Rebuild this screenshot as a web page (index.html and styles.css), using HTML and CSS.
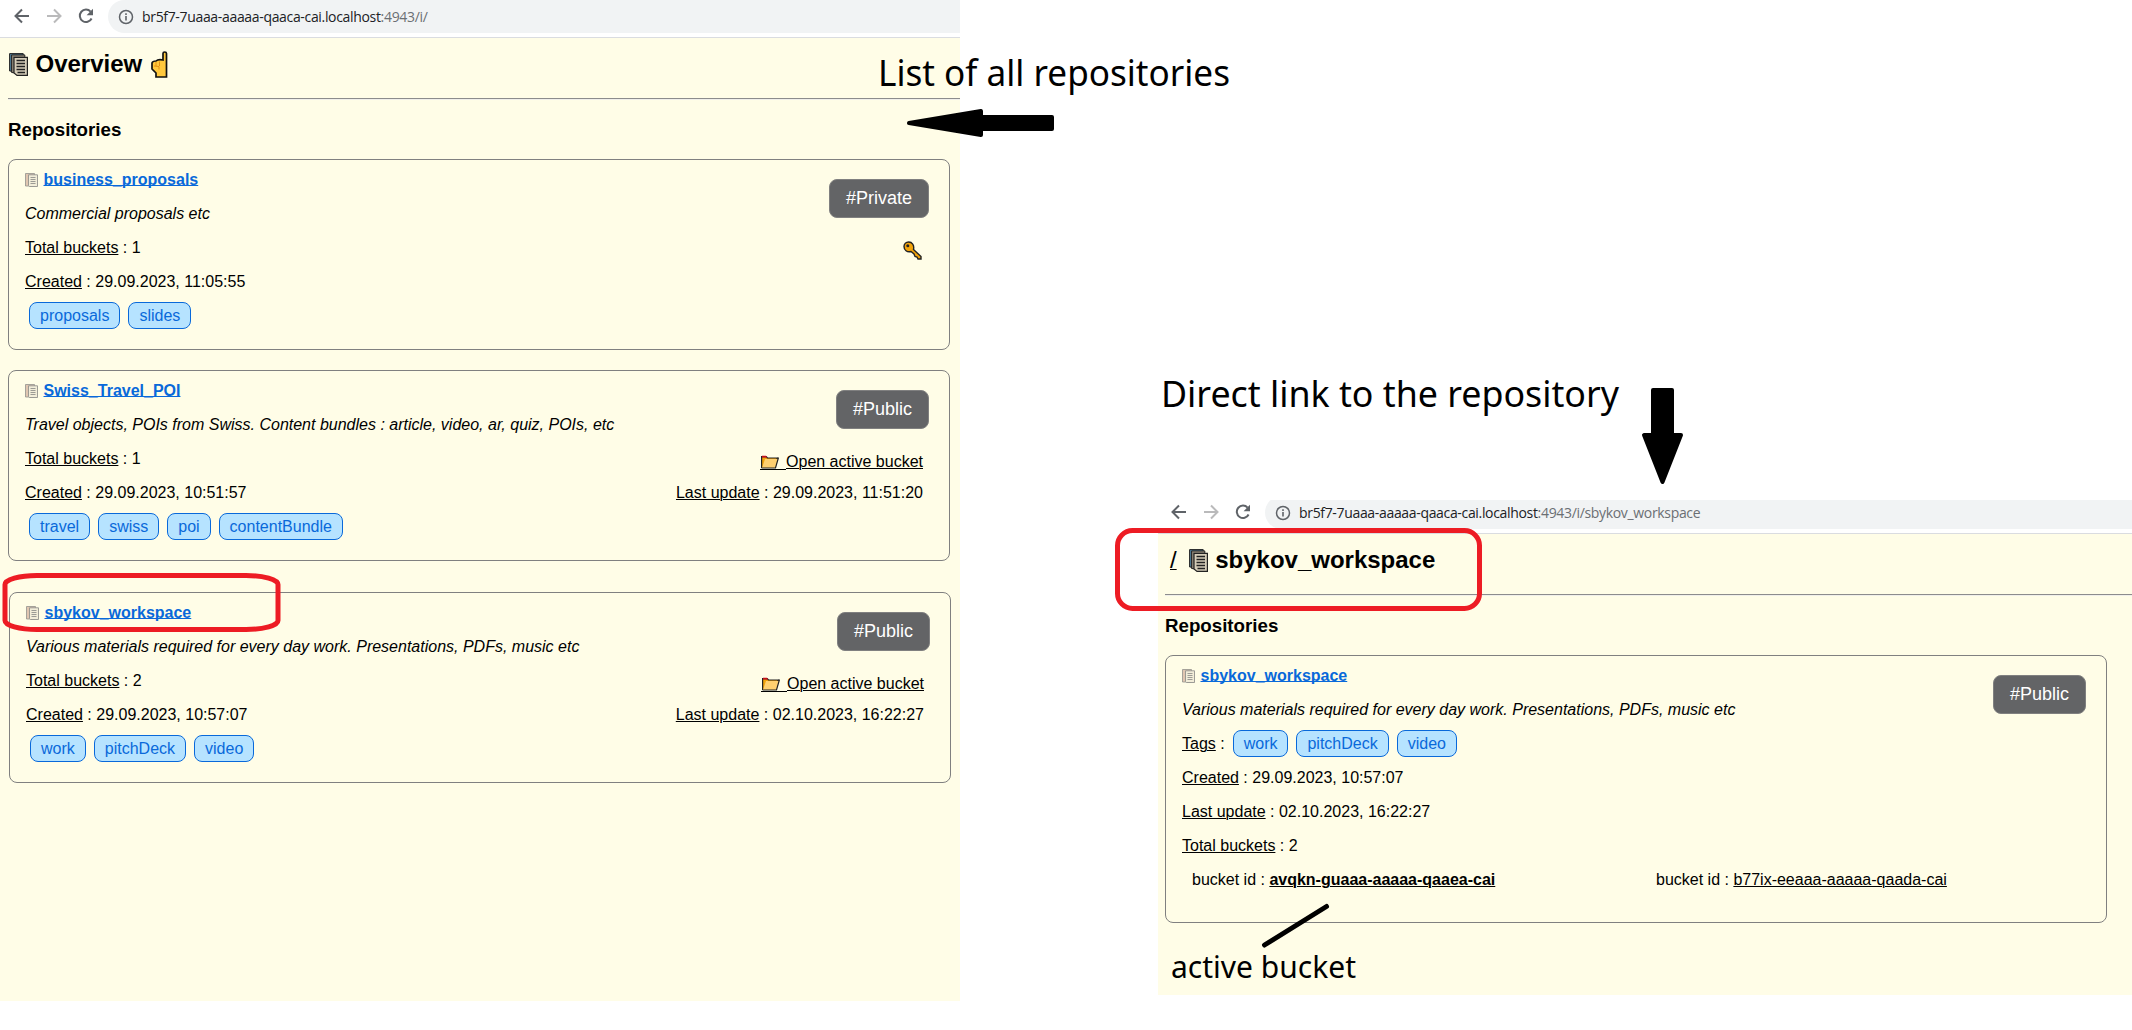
FILE: index.html
```html
<!DOCTYPE html>
<html lang="en">
<head>
<meta charset="utf-8">
<title>Repositories overview</title>
<link rel="stylesheet" href="styles.css">
</head>
<body>
<svg class="defs" width="0" height="0">
  <symbol id="back" viewBox="0 0 16 16"><path d="M15 8H2M8 1.5 1.5 8 8 14.5" fill="none" stroke="currentColor" stroke-width="2"/></symbol>
  <symbol id="forward" viewBox="0 0 16 16"><path d="M1 8h13M8 1.5 14.500 8 8 14.500" fill="none" stroke="currentColor" stroke-width="2"/></symbol>
  <symbol id="reload" viewBox="0 0 16 16"><path d="M13.600 10.500A6.200 6.200 0 1 1 12.600 3.600" fill="none" stroke="currentColor" stroke-width="2"/><path d="M15 .8v6.400H8.600z" fill="currentColor"/></symbol>
  <symbol id="info" viewBox="0 0 16 16"><circle cx="8" cy="8" r="6.500" fill="none" stroke="currentColor" stroke-width="1.500"/><path d="M8 7v4.500M8 4.300v1.600" stroke="currentColor" stroke-width="1.600"/></symbol>
  <symbol id="pages" viewBox="0 0 19 23">
    <path d="M.6.600h13.600v18.500L.6 18z" fill="#4f7f9c" stroke="#222"/>
    <path d="M2.600 1.900h13.200v19L2.600 19.500z" fill="#8f8778" stroke="#222"/>
    <path d="M5 4.300h13.400v18.100H8L5 20z" fill="#d5cdb9" stroke="#222" stroke-width="1.200"/>
    <path d="M7.500 7.500h8.500M7.500 10.500h8.500M7.500 13.500h8.500M7.500 16.500h8.500M8.500 19.500h7.500" stroke="#222" stroke-width="1.400"/>
  </symbol>
  <symbol id="pages-small" viewBox="0 0 13 14">
    <path d="M.5.500h9v12.500h-9z" fill="#d9b9a4" stroke="#777" stroke-width=".8"/>
    <path d="M3.500 1.800h9v11.700H4.500l-1-1z" fill="#efead6" stroke="#777" stroke-width=".9"/>
    <path d="M5.500 4.500h5M5.500 6.500h5M5.500 8.500h5M5.500 10.500h5" stroke="#777" stroke-width=".9"/>
  </symbol>
  <symbol id="folder" viewBox="0 0 19 14">
    <path d="M1.600 13V1.600h4.600L7.500 3h9.500v3" fill="#f2a30b" stroke="#222" stroke-width="1.200"/>
    <path d="M2 .8h4L7.200 2.400H2z" fill="#c50f1f"/>
    <path d="M5 4h13L15.500 13H2z" fill="#ffd070"/>
    <path d="M17 3.200h1.300L15.500 13H1.600" fill="none" stroke="#222" stroke-width="1.200"/>
  </symbol>
</svg>
<main class="canvas">
  <section class="window overview">
    <header class="toolbar">
      <nav class="nav"><svg><use href="#back"/></svg><svg class="off"><use href="#forward"/></svg><svg><use href="#reload"/></svg></nav>
      <div class="address"><svg><use href="#info"/></svg><span class="url">br5f7-7uaaa-aaaaa-qaaca-cai.localhost<span class="path">:4943/i/</span></span></div>
    </header>
    <div class="page">
      <h2><svg class="pages"><use href="#pages"/></svg><span>Overview</span>
        <svg class="hand" viewBox="0 0 17 27"><path d="M12 9V2.500q0-1.500 1.700-1.500t1.800 1.500V26H5v-4L1 18v-6q.500-2 4-2 2-2 7-1z" fill="#ffc83d" stroke="#111" stroke-width="1.700"/><path d="M5 11v4M8.500 10.500V15M3 15l5 .5v3" fill="none" stroke="#e08a10" stroke-width=".9"/></svg></h2>
      <hr>
      <h3>Repositories</h3>
      <article class="card">
        <div class="info">
          <p class="name"><svg><use href="#pages-small"/></svg><a>business_proposals</a></p>
          <p><i>Commercial proposals etc</i></p>
          <p><u>Total buckets</u> : 1</p>
          <p><u>Created</u> : 29.09.2023, 11:05:55</p>
          <p class="tags"><span>proposals</span><span>slides</span></p>
        </div>
        <aside>
          <span class="badge">#Private</span>
          <svg class="key" viewBox="0 0 19 19"><path d="M10.500 8.500 18 15.500V18h-3l-1-2-2-.5-1-2.500-3-2.500C4 11.500 1 9 1 5.500 1 3 3 1 5.700 1 9 1 11.500 4 10.500 8.500z" fill="#f2a30b" stroke="#222" stroke-width="1.400"/><circle cx="4.800" cy="4.800" r="1.500" fill="#222"/></svg>
        </aside>
      </article>
      <article class="card">
        <div class="info">
          <p class="name"><svg><use href="#pages-small"/></svg><a>Swiss_Travel_POI</a></p>
          <p><i>Travel objects, POIs from Swiss. Content bundles : article, video, ar, quiz, POIs, etc</i></p>
          <p><u>Total buckets</u> : 1</p>
          <p><u>Created</u> : 29.09.2023, 10:51:57</p>
          <p class="tags"><span>travel</span><span>swiss</span><span>poi</span><span>contentBundle</span></p>
        </div>
        <aside>
          <span class="badge">#Public</span>
          <a class="open"><svg><use href="#folder"/></svg>Open active bucket</a>
          <p class="updated"><u>Last update</u> : 29.09.2023, 11:51:20</p>
        </aside>
      </article>
      <article class="card selected">
        <div class="info">
          <p class="name"><svg><use href="#pages-small"/></svg><a>sbykov_workspace</a></p>
          <p><i>Various materials required for every day work. Presentations, PDFs, music etc</i></p>
          <p><u>Total buckets</u> : 2</p>
          <p><u>Created</u> : 29.09.2023, 10:57:07</p>
          <p class="tags"><span>work</span><span>pitchDeck</span><span>video</span></p>
        </div>
        <aside>
          <span class="badge">#Public</span>
          <a class="open"><svg><use href="#folder"/></svg>Open active bucket</a>
          <p class="updated"><u>Last update</u> : 02.10.2023, 16:22:27</p>
        </aside>
      </article>
    </div>
  </section>

  <section class="window detail">
    <header class="toolbar">
      <nav class="nav"><svg><use href="#back"/></svg><svg class="off"><use href="#forward"/></svg><svg><use href="#reload"/></svg></nav>
      <div class="address"><svg><use href="#info"/></svg><span class="url">br5f7-7uaaa-aaaaa-qaaca-cai.localhost<span class="path">:4943/i/sbykov_workspace</span></span></div>
    </header>
    <div class="page">
      <h2><a class="root">/</a><svg class="pages"><use href="#pages"/></svg><span>sbykov_workspace</span></h2>
      <hr>
      <h3>Repositories</h3>
      <article class="card">
        <div class="info">
          <p class="name"><svg><use href="#pages-small"/></svg><a>sbykov_workspace</a></p>
          <p><i>Various materials required for every day work. Presentations, PDFs, music etc</i></p>
          <p class="tags labelled"><span class="label"><u>Tags</u> :</span><span>work</span><span>pitchDeck</span><span>video</span></p>
          <p><u>Created</u> : 29.09.2023, 10:57:07</p>
          <p><u>Last update</u> : 02.10.2023, 16:22:27</p>
          <p><u>Total buckets</u> : 2</p>
          <div class="buckets"><p>bucket id : <b><u>avqkn-guaaa-aaaaa-qaaea-cai</u></b></p><p>bucket id : <u>b77ix-eeaaa-aaaaa-qaada-cai</u></p></div>
        </div>
        <aside><span class="badge">#Public</span></aside>
      </article>
    </div>
  </section>

  <svg class="notes" viewBox="0 0 2132 1030">
    <g class="note">
      <text x="878" y="86" font-size="37" textLength="352" lengthAdjust="spacingAndGlyphs">List of all repositories</text>
      <text x="1161" y="407" font-size="37" textLength="458" lengthAdjust="spacingAndGlyphs">Direct link to the repository</text>
      <text x="1171" y="978" font-size="30" textLength="185" lengthAdjust="spacingAndGlyphs">active bucket</text>
    </g>
    <g stroke="#000" stroke-width="4" stroke-linejoin="round">
      <path d="M909 123 981 111v6h71v12h-71v6z"/>
      <path d="M1653 390h19v45h9l-18.500 47L1644 435h9z"/>
    </g>
    <path d="M1264.500 945 1326.500 906.500" stroke="#000" stroke-width="5" stroke-linecap="round"/>
    <g fill="none" stroke="#ed1c24" stroke-width="5">
      <rect x="5" y="575.500" width="273" height="54" rx="32" ry="9"/>
      <rect x="1117.500" y="530.500" width="362" height="78" rx="15"/>
    </g>
  </svg>
</main>
</body>
</html>
```
FILE: styles.css
```css
* { box-sizing: border-box; }
body { margin: 0; background: #fff; color: #000; font: 16px/18px "Liberation Sans", Arial, sans-serif; }
p, h2, h3 { margin: 0; }
a, u { text-decoration: underline; text-decoration-thickness: 1px; }
.defs { position: absolute; }

.canvas { position: relative; display: flex; justify-content: space-between; align-items: flex-start; width: 2132px; height: 1030px; overflow: hidden; }
.window { overflow: hidden; background: #fffde7; }
.overview { width: 960px; height: 1001px; }
.detail { width: 974px; height: 495px; margin-top: 500px; }
.detail .toolbar { margin-top: -4px; }
.detail .toolbar, .detail .page { margin-left: -1px; }

.toolbar { display: flex; align-items: flex-start; height: 38px; padding-left: 14px; background: #fff; border-bottom: 1px solid #dadce0; }
.nav { display: flex; gap: 16px; width: 94px; padding-top: 8px; color: #5f6368; }
.nav svg { width: 16px; height: 16px; flex: none; }
.nav .off { color: #bababb; }
.address { display: flex; flex: 1; align-items: center; gap: 8px; height: 33px; padding-left: 10px; background: #f1f3f4; border-radius: 17px 0 0 17px; color: #5f6368; }
.address svg { width: 16px; height: 16px; flex: none; }
.url { color: #202124; font: 14px/20px "Open Sans", "Noto Sans", sans-serif; letter-spacing: -.33px; white-space: nowrap; }
.path { color: #6b6f73; }

.page { padding: 0 8px; }
h2 { display: flex; align-items: center; height: 60px; padding: 0 0 8px 1px; font-size: 24px; line-height: 28px; }
h2 .pages { width: 19px; height: 23px; margin-right: 7.500px; }
h2 .hand { width: 17px; height: 27px; margin-left: 8.500px; }
.root { margin: 0 12px 0 4px; font-weight: normal; }
hr { height: 2px; margin: 0 -8px 0 0; border: 0; border-top: 1px solid #8c8c8c; border-bottom: 1px solid #f0efea; }
h3 { padding: 19px 0; font-size: 18.720px; line-height: 21px; }

.card { display: flex; justify-content: space-between; width: 942px; height: 191px; margin-bottom: 20px; padding: 11px 20px 0 16px; border: 1px solid #808080; border-radius: 8px; }
.selected { margin: 31px 0 0 1px; }
.detail .card { height: 268px; }
.info { display: flex; flex-direction: column; gap: 16px; white-space: nowrap; }
.name { display: flex; align-items: center; color: #0969da; font-weight: bold; }
.name a { text-decoration-skip-ink: none; text-underline-offset: 0; }
.name svg { width: 13px; height: 14px; margin: 0 5.500px 0 0; opacity: .8; }
.tags { display: flex; align-items: flex-start; gap: 8px; padding-left: 4px; height: 18px; }
.tags span { height: 27px; margin-top: -5px; padding: 0 10px; border: 1px solid #0969da; border-radius: 8px; background: #b6e3ff; color: #0969da; line-height: 25px; }
.tags .label { padding: 0; border: 0; background: none; color: #000; }
.labelled { padding-left: 0; }
.labelled .label { line-height: 28px; }
.buckets { display: grid; grid-template-columns: 464px auto; padding-left: 10px; }

aside { display: flex; flex-direction: column; align-items: flex-end; padding-top: 8px; white-space: nowrap; }
.badge { height: 39px; padding: 0 16px; border: 1px solid #808080; border-radius: 8px; background: #636466; color: #fff; font-size: 18px; line-height: 36px; }
.key { width: 19px; height: 19px; margin: 23px 7px 0 0; }
.open { display: flex; align-items: flex-start; height: 18px; margin: 24px 6px 0 0; background: linear-gradient(#000, #000) 0 16px / 26px 1px no-repeat; }
.open svg { width: 19px; height: 14px; margin: 2px 7px 0 0; }
.updated { margin: 13px 6px 0 0; }

.notes { position: absolute; inset: 0; width: 2132px; height: 1030px; pointer-events: none; }
.note { font-family: "Noto Sans", "Open Sans", sans-serif; }
```
